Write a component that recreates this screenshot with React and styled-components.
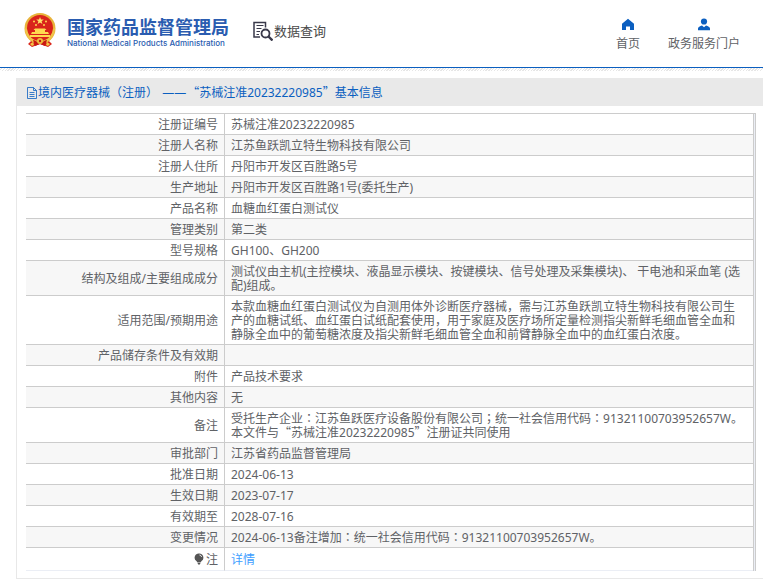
import React from "react";
import styled, { createGlobalStyle } from "styled-components";

const GlobalStyle = createGlobalStyle`
  * { box-sizing: border-box; }
  body {
    margin: 0;
    background: #fff;
    color: #606266;
    font: 12px/14px "Noto Sans", "Noto Sans CJK SC", sans-serif;
  }
`;

const Header = styled.header`
  display: flex;
  align-items: flex-start;
  padding: 12px 23px 0 23px;
  height: 67px;
`;

const HeaderRule = styled.div`
  height: 4px;
  border-top: 1px solid #0b5fc0;
  background: repeating-linear-gradient(135deg, #fff 0 1px, #e6e6e6 1px 2px);
`;

const Brand = styled.a`
  display: flex;
  align-items: flex-start;
  gap: 10px;
  color: #2a5cb0;
  text-decoration: none;
`;

const BrandText = styled.span`
  display: flex;
  flex-direction: column;
  padding-top: 4px;
`;

const BrandName = styled.span`
  font: bold 18px/20px "Noto Sans CJK SC", sans-serif;
`;

const BrandSub = styled.span`
  font: 500 8px/14px Inter, sans-serif;
  white-space: nowrap;
`;

const Section = styled.div`
  display: flex;
  align-items: center;
  gap: 1px;
  margin: 9px 0 0 24px;
  color: #4a4a4a;
  font: 400 13px/20px "Noto Sans CJK SC", sans-serif;
  white-space: nowrap;
`;

const Nav = styled.nav`
  display: flex;
  gap: 28px;
  margin: 6px 0 0 auto;
`;

const NavLink = styled.a`
  display: flex;
  flex-direction: column;
  align-items: center;
  gap: 6px;
  color: #606266;
  text-decoration: none;
  white-space: nowrap;
  svg { color: #0b5fc0; }
`;

const Panel = styled.main`
  margin: 7px 0 0 16px;
  border: solid #e8e8e8;
  border-width: 0 0 1px 1px;
`;

const TitleBar = styled.h1`
  display: flex;
  align-items: center;
  height: 28px;
  margin: 0 0 7px -1px;
  padding: 2px 0 0 10px;
  background: #e9e9e9;
  color: #0b5fc0;
  font: inherit;
  white-space: pre;
`;

const Quote = styled.span`
  font-family: "Noto Sans CJK SC", sans-serif;
  line-height: 0;
`;

const Centered = styled.span`
  font-family: "Noto Sans CJK TC", sans-serif;
  line-height: 0;
`;

const Dash = styled.span`
  margin: 0 1px;
`;

const TableFrame = styled.div`
  margin: 0 7px 7px 9px;
  padding-right: 1px;
  border: solid #ccc;
  border-width: 1px 1px 0 0;
  background: #ebeef5;
`;

const Table = styled.table`
  width: 100%;
  border-collapse: separate;
  border-spacing: 0;
  border-right: 1px solid #ccc;
  background: #fff;
`;

const Row = styled.tr`
  background: #fff;
  &:nth-child(even) { background: #f7f7f7; }
  th, td { border-bottom: 1px solid #ccc; }
  &:last-child th, &:last-child td {
    height: 23px;
    border-bottom-color: #ebeef5;
  }
`;

const Label = styled.th`
  width: 199px;
  height: 21px;
  padding: 4px 6px 2px;
  border-right: 1px solid #ccc;
  font-weight: normal;
  text-align: right;
  vertical-align: middle;
`;

const Value = styled.td`
  padding: 4px 8px 2px 6px;
  vertical-align: middle;
`;

const DetailLink = styled.a`
  color: #409eff;
  text-decoration: none;
`;

const BulbIcon = styled.svg`
  display: inline-block;
  margin-right: 2px;
  vertical-align: -1px;
`;

function Emblem() {
  return (
    <svg width="34" height="36" viewBox="0 0 34 36" aria-hidden="true">
      <path d="M10 27 5 32l4 3 8-3 8 3 4-3-5-5z" fill="#d92519" />
      <circle cx="17" cy="16.500" r="15.500" fill="#e9b33a" />
      <circle cx="17" cy="16" r="13" fill="#d9231b" />
      <path d="M2 16c0 8 5 13 11 15l1-2C8 27 5 23 4 17zM32 16c0 8-5 13-11 15l-1-2c6-2 9-6 10-12z" fill="#f0c348" />
      <path d="m17 5 1 2.600h2.800l-2.200 1.700.8 2.700-2.400-1.600-2.400 1.600.8-2.700-2.200-1.700H16z" fill="#ffe168" />
      <g fill="#ffd94f">
        <circle cx="11" cy="9.500" r="1" /><circle cx="23" cy="9.500" r="1" />
        <circle cx="13" cy="13" r="1" /><circle cx="21" cy="13" r="1" />
        <path d="M12 16.500h10l1.500 1.500h-13zM12 18h10v2H12zM9 20h16l1 2H8z" />
        <path d="M7 23h20v2H7z" />
      </g>
      <path d="M10 28c2 0 3 1 4 2h6c1-1 2-2 4-2l-2 6-5-2-5 2z" fill="#c91812" />
      <circle cx="17" cy="29" r="3" fill="#efbd3d" />
      <circle cx="17" cy="29" r="1.200" fill="#c91812" />
      <path d="m7 32 3-2 1 3-2 1zM27 32l-3-2-1 3 2 1z" fill="#f2c547" />
    </svg>
  );
}

function SearchDocIcon() {
  return (
    <svg width="20" height="20" viewBox="0 0 20 20" fill="none" stroke="#39394a" aria-hidden="true">
      <path d="M12.500 6.500V1.500H1v14.500h6" strokeWidth="1.500" />
      <path d="M3.500 4.500h7M3.500 7.500h5M3.500 10.500H7M3.500 13.500H6" />
      <circle cx="12.500" cy="12.500" r="4" strokeWidth="1.800" />
      <path d="m15.500 15.500 4 4" strokeWidth="2.400" />
    </svg>
  );
}

function HomeIcon() {
  return (
    <svg width="14" height="13" viewBox="0 0 14 13" fill="currentColor" aria-hidden="true">
      <path d="M7 .8 1 5.800V12h4V8.500h4V12h4V5.800z" />
    </svg>
  );
}

function UserIcon() {
  return (
    <svg width="14" height="13" viewBox="0 0 14 13" fill="currentColor" aria-hidden="true">
      <circle cx="7" cy="3.500" r="3.100" />
      <path d="M1 12.200V10.500C1 9 3 8 5 7.500l2 1.700 2-1.700c2 .5 4 1.500 4 3v1.700z" />
    </svg>
  );
}

function DocIcon() {
  return (
    <svg width="12" height="12" viewBox="0 0 12 12" fill="none" stroke="currentColor" strokeWidth="0.800" aria-hidden="true">
      <path d="M7.500.5h-6v11h9v-8zM7.500.5v3h3M3.500 5.500h5M3.500 7.500h5M3.500 9.500h5" />
    </svg>
  );
}

function Bulb() {
  return (
    <BulbIcon width="10" height="12" viewBox="0 0 10 12" aria-hidden="true">
      <path d="M5 .5a4.200 4.200 0 0 0-2.600 7.600L3.500 9.500h3l1.100-1.400A4.200 4.200 0 0 0 5 .5zM3.500 10h3l-.7 1.500H4.200z" fill="#555" />
      <path d="M5.500 2c1.200.2 1.900 1 2 2" fill="none" stroke="#fff" />
    </BulbIcon>
  );
}

function Prose({ children }) {
  return children.split(/([：；“”])/).map((part, i) => {
    if (/^[：；]$/.test(part)) return <Centered key={i} lang="zh-TW">{part}</Centered>;
    if (/^[“”]$/.test(part)) return <Quote key={i}>{part}</Quote>;
    return part;
  });
}

const rows = [
  ["注册证编号", "苏械注准20232220985"],
  ["注册人名称", "江苏鱼跃凯立特生物科技有限公司"],
  ["注册人住所", "丹阳市开发区百胜路5号"],
  ["生产地址", "丹阳市开发区百胜路1号(委托生产)"],
  ["产品名称", "血糖血红蛋白测试仪"],
  ["管理类别", "第二类"],
  ["型号规格", "GH100、GH200"],
  ["结构及组成/主要组成成分", "测试仪由主机(主控模块、液晶显示模块、按键模块、信号处理及采集模块)、 干电池和采血笔 (选配)组成。"],
  ["适用范围/预期用途", "本款血糖血红蛋白测试仪为自测用体外诊断医疗器械，需与江苏鱼跃凯立特生物科技有限公司生产的血糖试纸、血红蛋白试纸配套使用，用于家庭及医疗场所定量检测指尖新鲜毛细血管全血和静脉全血中的葡萄糖浓度及指尖新鲜毛细血管全血和前臂静脉全血中的血红蛋白浓度。"],
  ["产品储存条件及有效期", ""],
  ["附件", "产品技术要求"],
  ["其他内容", "无"],
  ["备注", "受托生产企业：江苏鱼跃医疗设备股份有限公司；统一社会信用代码：91321100703952657W。 本文件与“苏械注准20232220985”注册证共同使用"],
  ["审批部门", "江苏省药品监督管理局"],
  ["批准日期", "2024-06-13"],
  ["生效日期", "2023-07-17"],
  ["有效期至", "2028-07-16"],
  ["变更情况", "2024-06-13备注增加：统一社会信用代码：91321100703952657W。"],
];

export default function App() {
  return (
    <div lang="zh-CN">
      <GlobalStyle />
      <Header>
        <Brand href="#top">
          <Emblem />
          <BrandText>
            <BrandName>国家药品监督管理局</BrandName>
            <BrandSub>National Medical Products Administration</BrandSub>
          </BrandText>
        </Brand>
        <Section>
          <SearchDocIcon />
          数据查询
        </Section>
        <Nav>
          <NavLink href="#home"><HomeIcon />首页</NavLink>
          <NavLink href="#portal"><UserIcon />政务服务门户</NavLink>
        </Nav>
      </Header>
      <HeaderRule />
      <Panel>
        <TitleBar>
          <DocIcon />
          境内医疗器械（注册） <Dash>——</Dash>
          <span><Prose>“苏械注准20232220985”基本信息</Prose></span>
        </TitleBar>
        <TableFrame>
          <Table>
            <tbody>
              {rows.map(([label, value]) => (
                <Row key={label}>
                  <Label scope="row">{label}</Label>
                  <Value><Prose>{value}</Prose></Value>
                </Row>
              ))}
              <Row>
                <Label scope="row"><Bulb />注</Label>
                <Value><DetailLink href="#detail">详情</DetailLink></Value>
              </Row>
            </tbody>
          </Table>
        </TableFrame>
      </Panel>
    </div>
  );
}
